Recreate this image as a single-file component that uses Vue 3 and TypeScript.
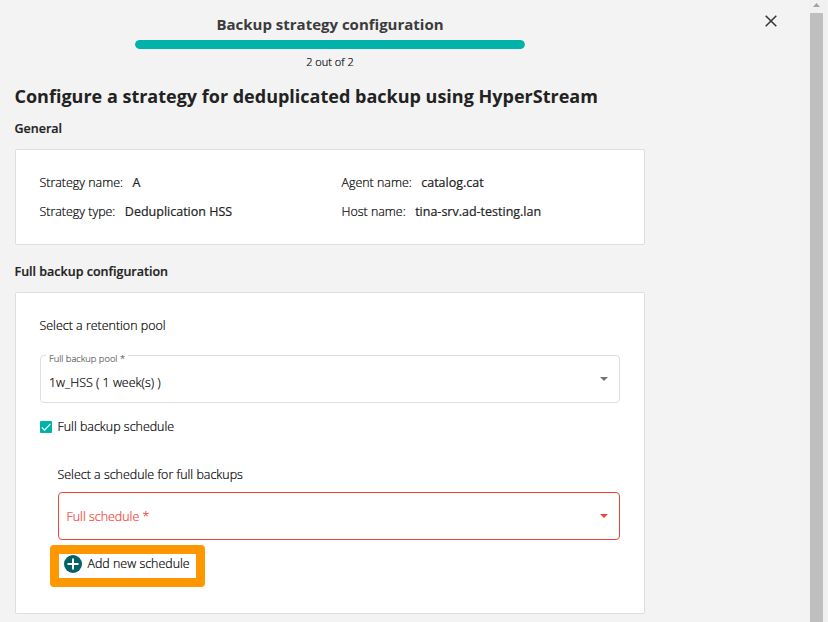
<script setup lang="ts">
import { ref } from 'vue'

interface Detail {
  label: string
  value: string
}

const step = ref(2)
const totalSteps = 2
const fullScheduleEnabled = ref(true)

const details: Detail[] = [
  { label: 'Strategy name:', value: 'A' },
  { label: 'Agent name:', value: 'catalog.cat' },
  { label: 'Strategy type:', value: 'Deduplication HSS' },
  { label: 'Host name:', value: 'tina-srv.ad-testing.lan' },
]
</script>

<template>
  <div class="page">
    <main class="dialog">
      <header class="head">
        <h1 class="title">Backup strategy configuration</h1>
        <div class="progress">
          <div class="bar" :style="{ width: (step / totalSteps) * 100 + '%' }"></div>
        </div>
        <p class="steps">{{ step }} out of {{ totalSteps }}</p>
      </header>

      <h2 class="heading">Configure a strategy for deduplicated backup using HyperStream</h2>

      <h3 class="section">General</h3>
      <section class="card general">
        <div v-for="d in details" :key="d.label" class="detail">
          <span class="label">{{ d.label }}</span>
          <span class="value">{{ d.value }}</span>
        </div>
      </section>

      <h3 class="section second">Full backup configuration</h3>
      <section class="card backup">
        <p class="text">Select a retention pool</p>
        <div class="field">
          <span class="floating">Full backup pool *</span>
          <span class="chosen">1w_HSS ( 1 week(s) )</span>
          <svg class="arrow" viewBox="0 0 8 4"><path d="M0 0h8L4 4z" fill="currentColor" /></svg>
        </div>
        <div class="check" @click="fullScheduleEnabled = !fullScheduleEnabled">
          <span class="box">
            <svg v-if="fullScheduleEnabled" viewBox="0 0 12 12">
              <path d="M1.8 6.4l2.7 2.7 5.9-6.2" fill="none" stroke="#fff" stroke-width="1.1" />
            </svg>
          </span>
          <span>Full backup schedule</span>
        </div>
        <div class="schedule">
          <p class="text">Select a schedule for full backups</p>
          <div class="field error">
            <span class="placeholder">Full schedule *</span>
            <svg class="arrow" viewBox="0 0 8 4"><path d="M0 0h8L4 4z" fill="currentColor" /></svg>
          </div>
          <button class="add" type="button">
            <svg class="plus" viewBox="0 0 18 18">
              <circle cx="9" cy="9" r="9" fill="#04616a" />
              <path d="M9 3.5v11M3.5 9h11" stroke="#fff" stroke-width="2" />
            </svg>
            <span class="add-text">Add new schedule</span>
          </button>
        </div>
      </section>
    </main>

    <aside class="close-area">
      <svg class="close" viewBox="0 0 12 12">
        <path d="M.7.7l10.6 10.6M11.3.7L.7 11.3" stroke="#333" stroke-width="1.5" />
      </svg>
    </aside>

    <div class="scrollbar">
      <svg class="up" viewBox="0 0 7 4"><path d="M3.5 0L7 4H0z" fill="#a3a3a3" /></svg>
      <div class="thumb"></div>
    </div>
  </div>
</template>

<style>
body {
  overflow: hidden;
}
</style>

<style scoped>
.page {
  display: flex;
  box-sizing: border-box;
  height: 622px;
  overflow: hidden;
  background: #f3f3f3;
  color: #000;
  font: 300 12.45px/20px 'Open Sans', sans-serif;
  -webkit-text-stroke: 0.2px currentColor;
}
h1, h2, h3, p {
  margin: 0;
}
.dialog {
  width: 630px;
  padding-left: 15px;
  flex: none;
}
.head {
  display: flex;
  flex-direction: column;
  align-items: center;
  padding-top: 13px;
}
.title {
  font-size: 15px;
  line-height: 22px;
  font-weight: 700;
  color: #3b3b3b;
  -webkit-text-stroke: 0;
}
.progress {
  width: 390px;
  height: 9px;
  margin-top: 5px;
  border-radius: 5px;
  overflow: hidden;
  background: #ddd;
}
.bar {
  height: 100%;
  border-radius: 5px;
  background: #00b2a9;
}
.steps {
  margin-top: 4px;
  font-size: 11px;
  line-height: 18px;
}
.heading {
  margin-top: 11px;
  margin-left: -0.5px;
  font-size: 18px;
  line-height: 28px;
  font-weight: 700;
  color: #222;
  white-space: nowrap;
  -webkit-text-stroke: 0;
}
.section {
  margin-top: 8px;
  margin-left: -0.5px;
  font-size: 12.5px;
  line-height: 22px;
  font-weight: 600;
  color: #222;
}
.second {
  margin-top: 16px;
}
.card {
  box-sizing: border-box;
  border: 1px solid #dedede;
  border-radius: 2px;
  background: #fff;
}
.general {
  display: grid;
  grid-template-columns: 302px 1fr;
  grid-auto-rows: 20px;
  row-gap: 9px;
  height: 96px;
  margin-top: 9px;
  padding: 23px 23.5px;
}
.detail {
  display: flex;
  gap: 9.5px;
  white-space: nowrap;
}
.value {
  font-weight: 400;
  font-size: 12.5px;
  color: #222;
}
.backup {
  height: 322px;
  margin-top: 9px;
  padding: 23px 24px;
}
.text {
  margin-left: -0.5px;
}
.field {
  position: relative;
  display: flex;
  align-items: center;
  box-sizing: border-box;
  height: 48px;
  margin-top: 19px;
  padding: 7px 11px 0 8px;
  border: 1px solid #dedede;
  border-radius: 4px;
}
.floating {
  position: absolute;
  left: 5px;
  top: -1px;
  padding: 0 3px;
  background: #fff;
  color: #666;
  font-size: 9.35px;
  line-height: 8px;
}
.arrow {
  width: 8px;
  height: 4px;
  margin-left: auto;
  margin-top: -7px;
  color: #757575;
}
.check {
  display: flex;
  align-items: center;
  gap: 5.5px;
  margin-top: 14px;
}
.box {
  width: 12px;
  height: 12px;
  border-radius: 1px;
  background: #00b2a9;
}
.box svg {
  display: block;
}
.schedule {
  padding: 28px 0 0 18px;
}
.schedule .field {
  margin-top: 7px;
}
.error {
  padding-top: 2px;
  padding-left: 7.5px;
  border-color: #f44336;
  color: #f44336;
}
.error .arrow {
  margin-top: -2px;
  color: #f44336;
}
.add {
  display: flex;
  align-items: center;
  gap: 5.5px;
  box-sizing: border-box;
  width: 155px;
  height: 42px;
  margin: 5px 0 0 -8px;
  padding: 0 5px 4px;
  border: 9px solid #ff9800;
  border-radius: 4px;
  background: #fff;
  color: #000;
  font: inherit;
  white-space: nowrap;
}
.plus {
  flex: none;
  width: 18px;
  height: 18px;
}
.close-area {
  flex: 1;
  padding: 15px 0 0 119.5px;
}
.close {
  display: block;
  width: 12px;
  height: 12px;
}
.scrollbar {
  display: flex;
  flex-direction: column;
  align-items: center;
  width: 18px;
  padding-right: 4px;
  box-sizing: border-box;
  margin-right: 1px;
  background: #f1f1f1;
}
.up {
  flex: none;
  width: 7px;
  height: 4px;
  margin: 3px 0 6px;
}
.thumb {
  width: 13px;
  flex: 1;
  background: #bfbfbf;
}
</style>
